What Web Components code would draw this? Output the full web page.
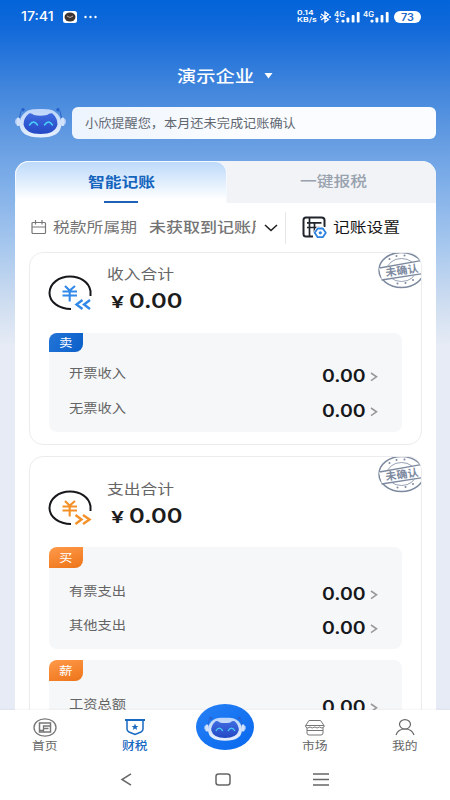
<!DOCTYPE html>
<html lang="zh-CN">
<head>
<meta charset="utf-8">
<title>智能记账</title>
<style>
html,body{margin:0;padding:0}
body{width:450px;height:800px;overflow:hidden;font-family:"Noto Sans CJK SC","Noto Sans",sans-serif;color:#666}
</style>
</head>
<body>
<finance-app></finance-app>
<script>
const define=(name,html,setup)=>{
  const t=document.createElement('template');
  t.innerHTML=html;
  customElements.define(name,class extends HTMLElement{
    constructor(){super();this.attachShadow({mode:'open'}).append(t.content.cloneNode(true));}
    connectedCallback(){if(setup)setup(this,this.shadowRoot);}
  });
};
const attr=(el,n,d='')=>el.getAttribute(n)??d;

/* Single line of text stretched horizontally to width w */
define('fit-text',`<style>
:host{display:block;flex:none;white-space:nowrap}
span{display:inline-block;transform-origin:0 50%;white-space:nowrap;vertical-align:top}
</style><span><slot></slot></span>`,(el,r)=>{
  const s=r.querySelector('span'),w=+attr(el,'w'),size=+attr(el,'size',14),h=+attr(el,'h',20);
  el.style.width=w+'px';el.style.height=h+'px';
  s.style.fontSize=size+'px';s.style.lineHeight=h+'px';
  s.style.transform='scaleX('+(w/s.offsetWidth)+')';
});

define('robot-face',`<style>:host{display:block;width:51px;height:32px}svg{display:block;width:100%;height:100%}</style>
<svg viewBox="0 0 51 32">
<defs><linearGradient id="f" x1="0" y1="0" x2="0" y2="1"><stop offset="0" stop-color="#3f6be0"/><stop offset="1" stop-color="#2448c4"/></linearGradient>
<linearGradient id="s" x1="0" y1="0" x2="0" y2="1"><stop offset="0" stop-color="#bcd5fa"/><stop offset="1" stop-color="#e6effe"/></linearGradient></defs>
<path d="M4 13L6 4M47 13L45 4" stroke="#2c63cb" stroke-width="1"/>
<circle cx="8" cy="2.700" r="1.700" fill="#275fcb"/><circle cx="43" cy="2.700" r="1.700" fill="#275fcb"/>
<rect x="0" y="12" width="5" height="5" rx="1.500" fill="#a9c8f5"/><rect x="46" y="12" width="5" height="5" rx="1.500" fill="#a9c8f5"/>
<rect x="1.500" y="10.500" width="3.500" height="8.500" rx="1.500" fill="#d3e2fb"/><rect x="46" y="10.500" width="3.500" height="8.500" rx="1.500" fill="#d3e2fb"/>
<path d="M25.500 2C34 2 38 2.500 42 6.500Q46.500 11 46.500 17Q46 30.500 25.500 30.500T4.500 17Q4.500 11 9 6.500C13 2.500 17 2 25.500 2Z" fill="url(#s)"/>
<path d="M14 6.500Q16 5.500 19 8Q25 9.500 32 8Q35 5.500 37.500 6.500Q42.500 11 42.500 17.500Q40 27 25.500 27T8.500 17.500Q8.500 11 14 6.500Z" fill="url(#f)"/>
<path d="M14.500 18Q18.500 12 22.500 18M29.500 18Q33.500 12 37.500 18" fill="none" stroke="#4bd2fa" stroke-width="1.400" stroke-linecap="round"/>
</svg>`);

define('status-bar',`<style>
:host{display:flex;align-items:center;height:33px;padding:0 29px 0 21px;box-sizing:border-box;color:#fff;font-family:Inter,sans-serif;font-weight:500}
.gap{flex:1}svg{display:block;flex:none}
.face{margin-left:9px}.dots{margin-left:7px}
.net{display:flex;flex-direction:column;width:20px;font-weight:600}
.bat{display:flex;justify-content:center;width:27px;height:12px;border-radius:6px;background:#fff;color:#2067c8;font-weight:600;margin-left:-7px}
</style>
<fit-text w="33" size="12.500" h="30">17:41</fit-text>
<svg class="face" width="14" height="12"><rect width="14" height="12" rx="2.500" fill="#fff"/><ellipse cx="7" cy="6" rx="5.500" ry="4.500" fill="#3d3431"/><path d="M4 5L7 6.500L10 5" stroke="#baa" fill="none"/></svg>
<svg class="dots" width="14" height="4"><g fill="#fff"><circle cx="1.500" cy="2" r="1.200"/><circle cx="6.500" cy="2" r="1.200"/><circle cx="11.500" cy="2" r="1.200"/></g></svg>
<span class="gap"></span>
<span class="net"><fit-text w="17" size="6.500" h="7">0.14</fit-text><fit-text w="20" size="6.500" h="7">KB/s</fit-text></span>
<svg width="82" height="14" viewBox="0 0 82 14" style="margin-left:2px"><g fill="none" stroke="#fff" stroke-width="1.300"><path d="M2 4L9.500 9.500L6 12V2L9.500 4.500L2 10M1 7H2.500M10 7H12"/></g>
<g fill="#fff"><path d="M16.300 9.700L18.300 7.500L20.300 9.700ZM16.300 10.700L18.300 12.900L20.300 10.700Z"/><rect x="22.500" y="9.800" width="3" height="2.700" rx="1"/><rect x="27.500" y="7.500" width="2.800" height="5" rx=".8"/><rect x="32.700" y="5" width="2.800" height="7.500" rx=".8"/><rect x="37.800" y="2" width="2.800" height="10.500" rx=".8"/>
<rect x="51.500" y="9.800" width="3" height="2.700" rx="1"/><rect x="56.500" y="7.500" width="2.800" height="5" rx=".8"/><rect x="61.600" y="5" width="2.800" height="7.500" rx=".8"/><rect x="66.800" y="2" width="2.800" height="10.500" rx=".8"/></g>
<g fill="#fff" font-family="Inter" font-weight="600" font-size="7"><text x="15" y="6.500" textLength="11" lengthAdjust="spacingAndGlyphs">4G</text><text x="44" y="6.500" textLength="11" lengthAdjust="spacingAndGlyphs">4G</text></g></svg>
<span class="bat"><fit-text w="13" size="10" h="12">73</fit-text></span>`);

define('company-title',`<style>:host{display:flex;align-items:center;height:30px;margin-top:27px;padding-left:177px;gap:10px;color:#fff;font-weight:500}svg{display:block;margin-top:2px}</style>
<fit-text w="77" size="16" h="30">演示企业</fit-text><svg width="9" height="6"><path d="M.5 0H8.500L4.500 5.500Z" fill="#fff"/></svg>`);

define('notice-bar',`<style>:host{display:flex;gap:6px;margin:17px 14px 0 15px;height:32px}
div{flex:1;display:flex;align-items:center;padding-left:13px;border-radius:6px;background:linear-gradient(100deg,#edf4fd,#fafcff 45%);color:#616771}</style>
<robot-face></robot-face><div><fit-text w="211" size="12.300" h="30"><slot></slot></fit-text></div>`);

define('tab-strip',`<style>:host{display:flex;height:42px;background:#f2f3f6;border-radius:14px 14px 0 0;overflow:hidden}
div{flex:none;width:212px;box-sizing:border-box;display:flex;flex-direction:column;align-items:center;font-weight:500;padding-top:9px;color:#98a2ae}
.on{border:1.500px solid #f3f9ff;border-bottom:0;border-radius:14px 12px 0 0;background:linear-gradient(#bddafa,#fff 92%);color:#1564bd;font-weight:700}
i{display:block;width:34px;height:2px;background:#1e62b8;margin-top:10px}</style>
<div class="on"><fit-text w="67" size="14" h="20">智能记账</fit-text><i></i></div><div><fit-text w="67" size="14" h="20">一键报税</fit-text></div>`);

define('filter-row',`<style>:host{display:flex;align-items:center;height:49px;padding-left:16px;color:#747474}
svg{display:block;flex:none}.clip{overflow:hidden;width:107px;margin-left:12px;font-weight:500}
hr{width:1px;height:32px;border:0;margin:0 16px 0 7px;background:#e6e6e6}.set{color:#151515}fit-text{margin-top:-3px}</style>
<svg width="16" height="15" fill="none" stroke="#777" stroke-width="1.200"><rect x="1" y="2.500" width="13.500" height="11" rx="1"/><path d="M1 7H14.500M4.500 0V4.500M11 0V4.500"/></svg>
<fit-text style="margin-left:6px" w="84" size="14" h="30">税款所属期</fit-text>
<div class="clip"><fit-text w="119" size="14" h="30">未获取到记账周</fit-text></div>
<svg style="margin-left:8px" width="14" height="8"><path d="M1 1L7 6.500L13 1" fill="none" stroke="#222" stroke-width="1.600"/></svg><hr>
<svg width="25" height="23" viewBox="0 0 25 23" fill="none"><path d="M22.500 11V4Q22.500 1.500 19.500 1.500H4Q1.500 1.500 1.500 4V18Q1.500 20.500 4 20.500H11" stroke="#20242b" stroke-width="2"/><path d="M7.500 2V20M5 6.800H19.500M5 11.500H18M12.500 7V17" stroke="#20242b" stroke-width="1.700"/><path d="M15 10.500H22L25 16.500L22 23H15L11.200 16.500Z" fill="#fff"/><path d="M15.700 12.500H20.800L23.800 16.800L20.800 21.200H15.700L12.700 16.800Z" stroke="#2d83df" stroke-width="1.800" stroke-linejoin="round"/><circle cx="18.300" cy="16.800" r="1.600" fill="#2d83df"/></svg>
<fit-text class="set" style="margin-left:6px" w="67" size="14" h="30">记账设置</fit-text>`);

define('money-icon',`<style>:host{display:block;width:44px;height:36px}svg{display:block}</style>
<svg width="44" height="36" viewBox="0 0 44 36" fill="none"><path d="M42.500 21V16C41 7 32 1.500 22 1.500C10.500 1.500 1.500 9 1.500 18C1.500 27 11 34 23 34" stroke="#17181b" stroke-width="2"/>
<g id="c" stroke-width="2.100"><path d="M17 11L21.700 15.500L27 11M14.500 16.500H29M14.500 20.500H29M21.700 16V26.500"/><path id="a" stroke-width="2.400"/></g></svg>`,(el,r)=>{
  const out=el.hasAttribute('out');
  r.getElementById('c').setAttribute('stroke',out?'#f39028':'#3389e9');
  r.getElementById('a').setAttribute('d',out?'M27.500 25L33.500 29.500L27.500 34M35 25L41.500 29.500L35 34':'M34.500 25L28.500 29.500L34.500 34M42 25L36 29.500L42 34');
});

define('status-stamp',`<style>:host{display:block;position:absolute;right:-3px;top:-1px}svg{display:block}</style>
<svg width="46" height="38" viewBox="0 0 46 38" fill="none" stroke="#7c899f"><ellipse cx="23.500" cy="18" rx="22.500" ry="17.500" stroke-width="1.500"/><ellipse cx="23.500" cy="18" rx="14.500" ry="11.500" stroke-width=".8"/><path d="M1 16L46 8V22L4 28Z" fill="#fff" stroke="none"/><path d="M1.500 16L46 8M3.500 28L46 21.500" stroke-width="1.300"/>
<g fill="#7c899f" stroke="none"><circle cx="11.500" cy="7" r="1"/><circle cx="18.500" cy="4" r="1"/><circle cx="26.500" cy="3.500" r="1"/><circle cx="19.500" cy="31.500" r="1"/><circle cx="27.500" cy="31" r="1"/><circle cx="35" cy="28" r="1"/>
<text transform="rotate(-8 24 19)" x="7.500" y="22.300" font-family="Noto Sans CJK SC" font-weight="700" font-size="10.500" textLength="33" lengthAdjust="spacingAndGlyphs">未确认</text></g></svg>`);

define('detail-row',`<style>:host{display:flex;height:34.500px;align-items:flex-start;padding:0 24px 0 19.500px;color:#646464}
.v{margin:3px 5px 0 auto;color:#16181b;font-family:Inter,sans-serif;font-weight:600}svg{margin-top:9px;display:block}</style>
<fit-text w="57" size="12.500" h="20"><slot></slot></fit-text><fit-text class="v" w="43.500" size="17" h="20">0.00</fit-text>
<svg width="8" height="10"><path d="M1 1L6.500 4.800L1 8.700" fill="none" stroke="#999" stroke-width="1.600"/></svg>`);

define('detail-box',`<style>:host{display:block;margin:0 19px 11px;border-radius:8px;background:#f6f7f9;box-sizing:border-box}
.tag{display:flex;align-items:center;justify-content:center;width:34px;border-radius:8px 0 8px 0;color:#fff;background:linear-gradient(120deg,#2274d7,#0a5fc9);box-sizing:border-box;padding-bottom:2px}
:host([out]) .tag{background:linear-gradient(165deg,#ff9a4a,#ed7419)}</style>
<div class="tag"><fit-text w="14" size="11.500" h="18"></fit-text></div><div class="rows"><slot></slot></div>`,(el,r)=>{
  el.style.height=attr(el,'height')+'px';
  r.querySelector('fit-text').textContent=attr(el,'tag');
  const h=+attr(el,'tagheight',21);
  r.querySelector('.tag').style.height=h+'px';
  r.querySelector('.rows').style.paddingTop=(+attr(el,'first')-h)+'px';
});

define('summary-card',`<style>:host{display:block;position:relative;box-sizing:border-box;border:1px solid #ececee;border-radius:14px;margin:0 14px 11px;background:#fff;overflow:hidden}
.head{display:flex;padding:9px 0 0 18px;height:80px;box-sizing:border-box;color:#666}
:host([out]) .head{height:90px;padding-top:20px}
money-icon{margin-top:13px}
.txt{display:flex;flex-direction:column;padding-left:15px}.sum{display:flex;color:#1c1c1c;font-family:Inter,sans-serif;font-weight:600;padding-left:4px;gap:5px;margin-top:4px}</style>
<div class="head"><money-icon></money-icon><div class="txt"><fit-text class="name" w="67" size="14" h="22"></fit-text><div class="sum"><fit-text w="13" size="16" h="26" style="padding-top:1px">¥</fit-text><fit-text w="53.500" size="20.500" h="26">0.00</fit-text></div></div></div>
<status-stamp></status-stamp><slot></slot>`,(el,r)=>{
  el.style.height=attr(el,'height')+'px';
  r.querySelector('.name').textContent=attr(el,'name');
  const m=r.querySelector('money-icon');
  m.toggleAttribute('out',el.hasAttribute('out'));
  m.connectedCallback();
});

define('nav-item',`<style>:host{flex:1;display:flex;flex-direction:column;align-items:center;padding-top:8px;color:#666}:host([active]){color:#1769c2;font-weight:500}::slotted(svg){display:block}fit-text{margin-top:-1px}</style>
<slot name="icon"></slot><fit-text w="26" size="10.800" h="18"><slot></slot></fit-text>`);

define('bottom-nav',`<style>:host{display:flex;height:50px;background:#fff;flex:none;box-shadow:0 -1px 2px #0000000a;position:relative}
.mid{flex:1;display:flex;justify-content:center}.ball{width:58px;height:46px;border-radius:50%;margin-top:-6px;background:linear-gradient(145deg,#2680f5,#0868ee);display:flex;align-items:center;justify-content:center}
robot-face{width:44px;height:26px;margin-top:3px}</style>
<nav-item><svg slot="icon" width="24" height="19" fill="none" stroke="#777"><ellipse cx="12" cy="9.500" rx="11" ry="8.700" stroke-width="1.300"/><rect x="6.500" y="5" width="11" height="9" stroke-width="1.500"/><path d="M10.500 14V8H17.500M10.500 10.500H15.500M7 12.500H11" stroke-width="1.300"/></svg>首页</nav-item>
<nav-item active><svg slot="icon" width="22" height="19" fill="none" stroke="#1769c2"><path d="M1 2H21" stroke-width="2"/><path d="M3 3V11Q3 13 5 14L11 16.500L17 14Q19 13 19 11V3" stroke-width="1.500"/><path d="M11 5.500L12 8H14.500L12.500 9.500L13.200 12L11 10.600L8.800 12L9.500 9.500L7.500 8H10Z" fill="#1769c2" stroke="none"/></svg>财税</nav-item>
<div class="mid"><div class="ball"><robot-face></robot-face></div></div>
<nav-item><svg slot="icon" width="20" height="19" fill="none" stroke="#777"><path d="M4 2.500H15.500L19 7.500V9Q17 11 14.500 9Q12 11 9.800 9Q7 11 5 9Q2.500 11 .7 9V7.500ZM.7 7.500H19M2 10V15Q2 17 4 17H16Q18 17 18 15V10M2 12.500H18"/></svg>市场</nav-item>
<nav-item><svg slot="icon" width="20" height="19" fill="none" stroke="#666" stroke-width="1.200"><ellipse cx="10" cy="6.300" rx="5.500" ry="4.700"/><path d="M1 17Q3 11 10 11T19 17"/></svg>我的</nav-item>`);

define('system-nav',`<style>:host{display:flex;height:40px;background:#fff;align-items:center;justify-content:space-between;padding:0 121px 2px 120px;box-sizing:border-box;position:relative}svg{display:block}</style>
<svg width="12" height="13"><path d="M11 .8L2 6.500L11 12.200" fill="none" stroke="#666" stroke-width="1.500"/></svg>
<svg width="16" height="13"><rect x="1" y="1" width="14" height="11" rx="2.500" fill="none" stroke="#666" stroke-width="1.500"/></svg>
<svg width="16" height="13"><path d="M0 1H16M0 6.500H16M0 12H16" stroke="#666" stroke-width="1.500"/></svg>`);

define('finance-app',`<style>:host{display:flex;flex-direction:column;width:450px;height:800px;overflow:hidden;background:linear-gradient(#0264d9 0,#1169da 28px,#3f84dc 85px,#669de2 142px,#77a9e7 170px,#a6c7ee 245px,#ccdcf0 300px,#e6ebf5 345px,#e7ebf5 800px)}
main{flex:1;min-height:0;overflow:hidden;margin:22px 14px 0 15px;background:#fff;border-radius:14px 14px 0 0}</style>
<status-bar></status-bar><company-title></company-title><notice-bar>小欣提醒您，本月还未完成记账确认</notice-bar>
<main><tab-strip></tab-strip><filter-row></filter-row>
<summary-card name="收入合计" height="193"><detail-box tag="卖" height="99" first="30" tagheight="19"><detail-row>开票收入</detail-row><detail-row>无票收入</detail-row></detail-box></summary-card>
<summary-card out name="支出合计" height="330"><detail-box out tag="买" height="102" first="33.500"><detail-row>有票支出</detail-row><detail-row>其他支出</detail-row></detail-box><detail-box out tag="薪" height="102" first="33.500"><detail-row>工资总额</detail-row></detail-box></summary-card></main>
<bottom-nav></bottom-nav><system-nav></system-nav>`);

/* Refit once all elements are upgraded and slotted text is in place */
const refit=root=>root.querySelectorAll('*').forEach(e=>{
  if(e.localName==='fit-text')e.connectedCallback();
  if(e.shadowRoot)refit(e.shadowRoot);
});
refit(document);
</script>
</body>
</html>
